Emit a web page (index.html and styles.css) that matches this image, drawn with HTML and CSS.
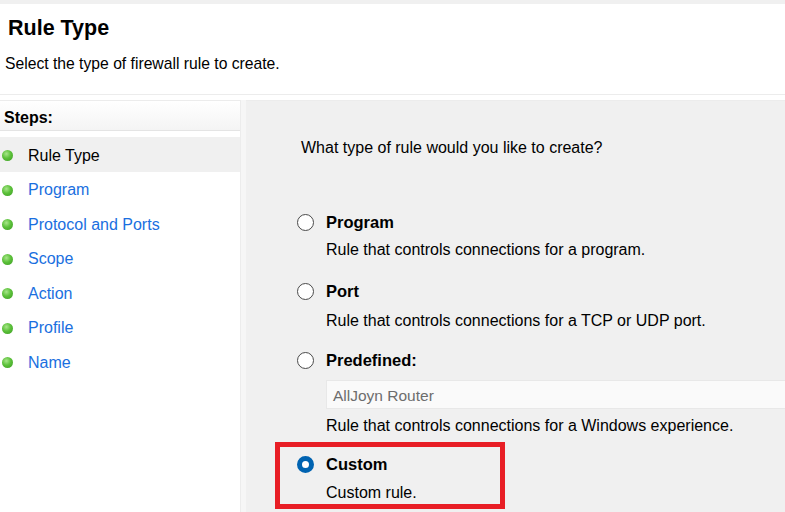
FILE: index.html
```html
<!DOCTYPE html>
<html>
<head>
<meta charset="utf-8">
<link rel="stylesheet" href="styles.css">
</head>
<body>
<div class="window">
  <div class="topbar"></div>
  <header class="header">
    <h1 class="title">Rule Type</h1>
    <p class="subtitle">Select the type of firewall rule to create.</p>
  </header>
  <div class="main">
    <aside class="steps">
      <div class="steps-head">Steps:</div>
      <ul class="step-list">
        <li class="step current"><span class="dot"></span>Rule Type</li>
        <li class="step"><span class="dot"></span>Program</li>
        <li class="step"><span class="dot"></span>Protocol and Ports</li>
        <li class="step"><span class="dot"></span>Scope</li>
        <li class="step"><span class="dot"></span>Action</li>
        <li class="step"><span class="dot"></span>Profile</li>
        <li class="step"><span class="dot"></span>Name</li>
      </ul>
    </aside>
    <div class="gutter"></div>
    <section class="content">
      <p class="question">What type of rule would you like to create?</p>
      <div class="options">
        <div class="option opt-program">
          <div class="opt-row"><span class="radio"></span><span class="opt-label">Program</span></div>
          <div class="opt-desc">Rule that controls connections for a program.</div>
        </div>
        <div class="option opt-port">
          <div class="opt-row"><span class="radio"></span><span class="opt-label">Port</span></div>
          <div class="opt-desc">Rule that controls connections for a TCP or UDP port.</div>
        </div>
        <div class="option opt-predefined">
          <div class="opt-row"><span class="radio"></span><span class="opt-label">Predefined:</span></div>
          <div class="combo">AllJoyn Router</div>
          <div class="opt-desc">Rule that controls connections for a Windows experience.</div>
        </div>
        <div class="option custom">
          <div class="opt-row"><span class="radio checked"></span><span class="opt-label">Custom</span></div>
          <div class="opt-desc">Custom rule.</div>
        </div>
      </div>
    </section>
  </div>
</div>
</body>
</html>
```
FILE: styles.css
```css
html, body {
  margin: 0;
  padding: 0;
}
body {
  width: 785px;
  height: 512px;
  overflow: hidden;
  font-family: "Liberation Sans", Arial, sans-serif;
  background: #f0f0f0;
  color: #000;
}
.window {
  display: flex;
  flex-direction: column;
  height: 512px;
}
.topbar {
  height: 4px;
  background: #f0f0f0;
}
.header {
  background: #fff;
  height: 91px;
  border-bottom: 1px solid #ececec;
  box-sizing: border-box;
}
.title {
  margin: 0;
  padding: 13px 0 0 8px;
  font-size: 21.5px;
  line-height: 22px;
  font-weight: bold;
  color: #000;
}
.subtitle {
  margin: 0;
  padding: 17px 0 0 5px;
  font-size: 15.7px;
  line-height: 16px;
}
.main {
  flex: 1;
  display: flex;
  background: #fff;
  padding-top: 5px;
}
.steps {
  width: 240px;
  background: #fff;
  border-top: 1px solid #ececec;
  border-right: 1px solid #ececec;
}
.steps-head {
  height: 30px;
  box-sizing: border-box;
  padding: 8px 0 0 4px;
  font-size: 16px;
  font-weight: bold;
  background: linear-gradient(#ffffff, #f4f4f4);
  border-bottom: 1px solid #e4e4e4;
}
.step-list {
  list-style: none;
  margin: 6px 0 0 0;
  padding: 0;
}
.step {
  display: flex;
  align-items: center;
  height: 34.5px;
  box-sizing: border-box;
  padding-top: 3px;
  font-size: 16px;
  color: #1a6fe0;
}
.step.current {
  background: #f0f0f0;
  color: #000;
}
.dot {
  width: 11px;
  height: 11px;
  border-radius: 50%;
  margin: 0 15px 0 2px;
  background: radial-gradient(circle at 40% 35%, #a8e68a 0%, #5cc13a 45%, #3a9a22 100%);
}
.gutter {
  width: 5px;
  background: #f6f6f6;
}
.content {
  flex: 1;
  background: #f0f0f0;
  border-top: 1px solid #ececec;
  padding: 37px 0 0 55px;
  box-sizing: border-box;
}
.question {
  margin: 0;
  font-size: 16px;
  line-height: 20px;
  color: #000;
}
.options {
  margin: 54px 0 0 -4px;
  display: flex;
  flex-direction: column;
}
.opt-row {
  display: flex;
  align-items: center;
  height: 20px;
}
.radio {
  width: 17px;
  height: 17px;
  border: 1.5px solid #4a4a4a;
  border-radius: 50%;
  background: #fff;
  box-sizing: border-box;
  margin-right: 12px;
}
.radio.checked {
  border: 5.5px solid #0063b1;
  background: #fff;
}
.opt-label {
  font-size: 16.5px;
  font-weight: bold;
}
.opt-desc {
  margin: 8px 0 0 29px;
  font-size: 16px;
  line-height: 20px;
}
.opt-port {
  margin-top: 21px;
}
.opt-port .opt-desc {
  margin-top: 10px;
}
.opt-predefined {
  margin-top: 19px;
}
.combo {
  margin: 10px 0 0 29px;
  height: 29px;
  background: #fafafa;
  border: 1px solid #e8e8e8;
  border-right: none;
  box-sizing: border-box;
  padding: 6px 0 0 6px;
  font-size: 15.5px;
  line-height: 18px;
  color: #6d6d6d;
}
.combo + .opt-desc {
  margin-top: 7px;
}
.custom {
  align-self: flex-start;
  margin: 6px 0 0 -22px;
  padding: 7px 0 0 17px;
  width: 230px;
  height: 67px;
  box-sizing: border-box;
  border: 5px solid #e81e25;
}
.custom .opt-desc {
  margin-top: 9px;
}
```
